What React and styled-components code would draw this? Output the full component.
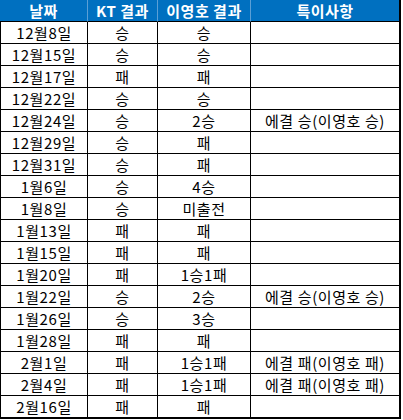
import React from "react";
import styled, { createGlobalStyle } from "styled-components";

const GlobalStyle = createGlobalStyle`
  html, body {
    margin: 0;
    padding: 0;
    background: #ffffff;
  }
  * {
    box-sizing: border-box;
  }
`;

const Sheet = styled.div`
  width: 401px;
  font-family: "Noto Sans CJK KR", "Noto Sans", sans-serif;
  font-size: 15px;
  color: #000000;
`;

const Row = styled.div`
  display: grid;
  grid-template-columns: 88px 70px 93px 150px;
  height: ${(p) => (p.$last ? "23px" : "22px")};
  background: ${(p) => (p.$head ? "#0070c0" : "#ffffff")};
`;

const HeadCell = styled.div`
  display: flex;
  align-items: center;
  justify-content: center;
  color: #ffffff;
  font-weight: 700;
  line-height: 1;
  letter-spacing: 0.5px;
  border-bottom: 1px solid #000000;
  border-right: ${(p) => (p.$end ? "2px solid #000000" : "1px solid #5a9fd6")};
`;

const Cell = styled.div`
  display: flex;
  align-items: center;
  justify-content: center;
  line-height: 1;
  letter-spacing: 0.6px;
  white-space: nowrap;
  border-bottom: ${(p) => (p.$last ? "2px" : "1px")} solid #000000;
  border-left: ${(p) => (p.$first ? "1px solid #000000" : "none")};
  border-right: ${(p) => (p.$end ? "2px" : "1px")} solid #000000;
`;

const rows = [
  ["12월8일", "승", "승", ""],
  ["12월15일", "승", "승", ""],
  ["12월17일", "패", "패", ""],
  ["12월22일", "승", "승", ""],
  ["12월24일", "승", "2승", "에결 승(이영호 승)"],
  ["12월29일", "승", "패", ""],
  ["12월31일", "승", "패", ""],
  ["1월6일", "승", "4승", ""],
  ["1월8일", "승", "미출전", ""],
  ["1월13일", "패", "패", ""],
  ["1월15일", "패", "패", ""],
  ["1월20일", "패", "1승1패", ""],
  ["1월22일", "승", "2승", "에결 승(이영호 승)"],
  ["1월26일", "승", "3승", ""],
  ["1월28일", "패", "패", ""],
  ["2월1일", "패", "1승1패", "에결 패(이영호 패)"],
  ["2월4일", "패", "1승1패", "에결 패(이영호 패)"],
  ["2월16일", "패", "패", ""],
];

const headers = ["날짜", "KT 결과", "이영호 결과", "특이사항"];

export default function App() {
  return (
    <>
      <GlobalStyle />
      <Sheet>
        <Row $head>
          {headers.map((h, i) => (
            <HeadCell key={h} $end={i === 3}>
              {h}
            </HeadCell>
          ))}
        </Row>
        {rows.map((r, ri) => {
          const last = ri === rows.length - 1;
          return (
            <Row key={ri} $last={last}>
              {r.map((v, ci) => (
                <Cell key={ci} $first={ci === 0} $end={ci === 3} $last={last}>
                  {v}
                </Cell>
              ))}
            </Row>
          );
        })}
      </Sheet>
    </>
  );
}
